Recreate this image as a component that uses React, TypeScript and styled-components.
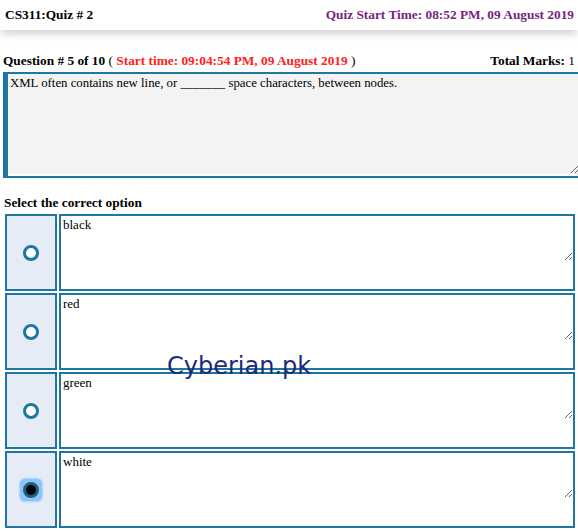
import React from "react";
import styled, { createGlobalStyle } from "styled-components";

const teal = "#1f76a0";

const GlobalStyle = createGlobalStyle`
  html, body { margin: 0; padding: 0; background: #fff; }
  body { font-family: "Liberation Serif", "Times New Roman", serif; color: #000; }
  * { box-sizing: border-box; }
`;

const Page = styled.div`
  position: relative;
  width: 578px;
  overflow: hidden;
`;

const Header = styled.header`
  height: 30px;
  display: flex;
  align-items: center;
  justify-content: space-between;
  padding: 0 4px 0 5px;
  font-size: 13.33px;
  font-weight: bold;
  box-shadow: 0 5px 8px -1px rgba(0, 0, 0, 0.18);
  position: relative;
  z-index: 1;
`;

const QuizStart = styled.span`
  color: #7b1f7d;
`;

const Main = styled.main`
  padding: 23px 0 0 3px;
`;

const QuestionBar = styled.div`
  display: flex;
  justify-content: space-between;
  font-size: 13.33px;
  font-weight: bold;
  padding-right: 3px;
  line-height: 15px;
`;

const Red = styled.span`
  color: #ff2121;
`;

const Normal = styled.span`
  font-weight: normal;
`;

const QuestionBox = styled.div`
  margin-top: 4px;
  border-top: 2px solid ${teal};
  border-bottom: 2px solid ${teal};
  border-left: 5px solid ${teal};
  padding-bottom: 2px;
  margin-right: -3px;
  display: flex;
`;

const QuestionText = styled.textarea`
  flex: 1;
  height: 100px;
  border: none;
  background: #f3f3f3;
  font-family: "Liberation Serif", "Times New Roman", serif;
  font-size: 12.8px;
  padding: 2px 2px;
  margin: 0 2px 0 0;
  resize: vertical;
  outline: none;
  color: #000;
  display: block;
`;

const SelectLabel = styled.div`
  font-size: 13.33px;
  line-height: 15px;
  font-weight: bold;
  margin: 17px 0 4px 1px;
`;

const Options = styled.div`
  display: flex;
  flex-direction: column;
  gap: 2px;
  padding-left: 2px;
  padding-right: 3px;
`;

const OptionRow = styled.label`
  display: flex;
  gap: 2px;
  height: 77px;
`;

const RadioCell = styled.div`
  width: 52px;
  border: 2px solid ${teal};
  background: #e6ecf6;
  display: flex;
  align-items: center;
  justify-content: center;
`;

const FocusRing = styled.span<{ $on: boolean }>`
  display: inline-flex;
  padding: 3px;
  border-radius: 5px;
  background: ${(p) => (p.$on ? "#8ec3f7" : "transparent")};
  box-shadow: ${(p) => (p.$on ? "0 0 2px 1px #a9d2fb" : "none")};
`;

const Radio = styled.input`
  appearance: none;
  -webkit-appearance: none;
  margin: 0;
  width: 16px;
  height: 16px;
  border-radius: 50%;
  border: 3px solid ${teal};
  background: #fff;
  &:checked {
    background: #000;
    border: 3px solid #1c5f7f;
  }
`;

const AnswerCell = styled.div`
  flex: 1;
  border: 2px solid ${teal};
  background: #fff;
`;

const AnswerText = styled.textarea`
  display: block;
  width: 100%;
  height: 45px;
  border: none;
  font-family: "Liberation Serif", "Times New Roman", serif;
  font-size: 13px;
  padding: 1px 2px;
  resize: vertical;
  outline: none;
  background: #fff;
  color: #000;
  margin: 0;
`;

const Watermark = styled.div`
  position: absolute;
  left: 167px;
  top: 352px;
  font-family: "DejaVu Sans", Verdana, sans-serif;
  font-size: 24px;
  color: #1d2a7a;
  pointer-events: none;
`;

const options = ["black", "red", "green", "white"];

export default function App() {
  const [sel, setSel] = React.useState(3);
  return (
    <Page>
      <GlobalStyle />
      <Header>
        <span>CS311:Quiz # 2</span>
        <QuizStart>Quiz Start Time: 08:52 PM, 09 August 2019</QuizStart>
      </Header>
      <Main>
        <QuestionBar>
          <span>
            Question # 5 of 10 <Normal>(</Normal>{" "}
            <Red>Start time: 09:04:54 PM, 09 August 2019</Red> <Normal>)</Normal>
          </span>
          <span>
            Total Marks: <Normal>1</Normal>
          </span>
        </QuestionBar>
        <QuestionBox>
          <QuestionText
            readOnly
            defaultValue="XML often contains new line, or _______ space characters, between nodes."
          />
        </QuestionBox>
        <SelectLabel>Select the correct option</SelectLabel>
        <Options>
          {options.map((o, i) => (
            <OptionRow key={o}>
              <RadioCell>
                <FocusRing $on={sel === i}>
                  <Radio
                    type="radio"
                    name="opt"
                    checked={sel === i}
                    onChange={() => setSel(i)}
                  />
                </FocusRing>
              </RadioCell>
              <AnswerCell>
                <AnswerText readOnly defaultValue={o} />
              </AnswerCell>
            </OptionRow>
          ))}
        </Options>
      </Main>
      <Watermark>Cyberian.pk</Watermark>
    </Page>
  );
}
